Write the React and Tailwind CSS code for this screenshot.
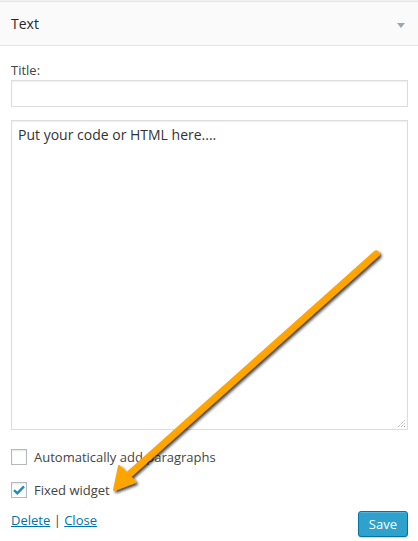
import React from "react";

export default function App() {
  return (
    <div className="relative w-[418px] h-[541px] overflow-hidden bg-white font-['Open_Sans',sans-serif] text-[13px] text-[#444]">
      <div className="h-px bg-[#f1f1f1]" />
      <div className="flex h-[45px] items-center justify-between border-y border-[#e5e5e5] bg-[#fafafa] pl-[11px] pr-[13px]">
        <span className="text-[14px] font-normal text-[#23282d]">Text</span>
        <svg width="8" height="5" viewBox="0 0 8 5" className="mt-[3px]">
          <polygon points="0,0 8,0 4,5" fill="#a0a5aa" />
        </svg>
      </div>
      <div className="px-[11px] pr-[10px]">
        <div className="mt-[15px] leading-[18px]">Title:</div>
        <div className="mt-[1px] h-[27px] w-full border border-[#ddd] bg-white shadow-[inset_0_1px_2px_rgba(0,0,0,0.07)]" />
        <div className="relative mt-[13px] h-[310px] w-full border border-[#ddd] bg-white px-[6px] py-[4px] text-[14px] leading-[20px] text-[#333] shadow-[inset_0_1px_2px_rgba(0,0,0,0.07)]">
          Put your code or HTML here....
          <svg width="9" height="9" viewBox="0 0 9 9" className="absolute bottom-px right-px">
            <line x1="1" y1="8" x2="8" y2="1" stroke="#777" strokeWidth="0.8" strokeDasharray="1 1" />
            <line x1="4" y1="8" x2="8" y2="4" stroke="#777" strokeWidth="0.8" strokeDasharray="1 1" />
            <line x1="7" y1="8" x2="8" y2="7" stroke="#777" strokeWidth="0.8" />
          </svg>
        </div>
        <div className="mt-[18px] flex items-center gap-[7px]">
          <div className="h-4 w-4 border border-[#b4b9be] bg-white shadow-[inset_0_1px_2px_rgba(0,0,0,0.1)]" />
          <span className="leading-[18px]">Automatically add paragraphs</span>
        </div>
        <div className="mt-[15px] flex items-center gap-[7px]">
          <div className="flex h-4 w-4 items-center justify-center border border-[#b4b9be] bg-white shadow-[inset_0_1px_2px_rgba(0,0,0,0.1)]">
            <svg width="12" height="10" viewBox="0 0 12 10">
              <path d="M1 5.2 L4.3 8.3 L11 1.3" fill="none" stroke="#1e8cbe" strokeWidth="2.4" />
            </svg>
          </div>
          <span className="leading-[18px]">Fixed widget</span>
        </div>
        <div className="mt-[12px] flex items-start justify-between">
          <div className="leading-[18px]">
            <a className="text-[#0073aa] underline">Delete</a>
            <span className="text-[#444]"> | </span>
            <a className="text-[#0073aa] underline">Close</a>
          </div>
          <button className="h-[26px] rounded-[3px] border border-[#0074a2] bg-[#2ea2cc] px-[10px] text-[13px] leading-[23px] text-white shadow-[inset_0_1px_0_rgba(120,200,230,0.5),0_1px_0_rgba(0,0,0,0.15)]">
            Save
          </button>
        </div>
      </div>
      <svg
        width="418"
        height="541"
        viewBox="0 0 418 541"
        className="pointer-events-none absolute left-0 top-0"
      >
        <defs>
          <filter id="sh" x="-20%" y="-20%" width="140%" height="140%">
            <feGaussianBlur in="SourceAlpha" stdDeviation="1.5" />
            <feOffset dx="2" dy="2" result="b" />
            <feComponentTransfer>
              <feFuncA type="linear" slope="0.75" />
            </feComponentTransfer>
            <feMerge>
              <feMergeNode />
              <feMergeNode in="SourceGraphic" />
            </feMerge>
          </filter>
        </defs>
        <g filter="url(#sh)">
          <line x1="376" y1="254" x2="125" y2="478" stroke="#ffa400" strokeWidth="7" strokeLinecap="round" />
          <polygon points="114,490 119,466 135,482" fill="#ffa400" stroke="#ffa400" strokeWidth="2" strokeLinejoin="round" />
        </g>
      </svg>
    </div>
  );
}
